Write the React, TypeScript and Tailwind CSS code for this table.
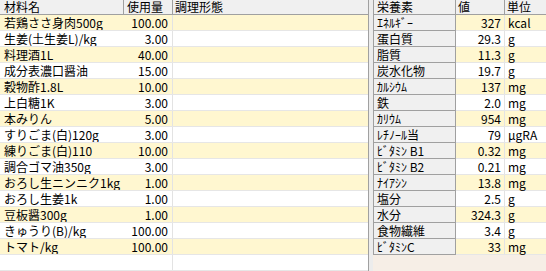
import React from "react";

const ingredients = [
  ["若鶏ささ身肉500g", "100.00"],
  ["生姜(土生姜L)/kg", "3.00"],
  ["料理酒1L", "40.00"],
  ["成分表濃口醤油", "15.00"],
  ["穀物酢1.8L", "10.00"],
  ["上白糖1K", "3.00"],
  ["本みりん", "5.00"],
  ["すりごま(白)120g", "3.00"],
  ["練りごま(白)110", "10.00"],
  ["調合ゴマ油350g", "3.00"],
  ["おろし生ニンニク1kg", "1.00"],
  ["おろし生姜1k", "1.00"],
  ["豆板醤300g", "1.00"],
  ["きゅうり(B)/kg", "100.00"],
  ["トマト/kg", "100.00"],
  ["", ""],
];

const nutrients = [
  ["ｴﾈﾙｷﾞｰ", "327", "kcal"],
  ["蛋白質", "29.3", "g"],
  ["脂質", "11.3", "g"],
  ["炭水化物", "19.7", "g"],
  ["ｶﾙｼｳﾑ", "137", "mg"],
  ["鉄", "2.0", "mg"],
  ["ｶﾘｳﾑ", "954", "mg"],
  ["ﾚﾁﾉｰﾙ当", "79", "μgRA"],
  ["ﾋﾞﾀﾐﾝ B1", "0.32", "mg"],
  ["ﾋﾞﾀﾐﾝ B2", "0.21", "mg"],
  ["ﾅｲｱｼﾝ", "13.8", "mg"],
  ["塩分", "2.5", "g"],
  ["水分", "324.3", "g"],
  ["食物繊維", "3.4", "g"],
  ["ﾋﾞﾀﾐﾝC", "33", "mg"],
];

const App = () => {
  return (
    <div className="flex h-[271px] w-[546px] overflow-hidden bg-[#ececec] font-['Noto_Sans_CJK_JP',sans-serif] text-[12px] leading-[14px] text-black">
      {/* 材料 */}
      <div className="flex w-[369px] shrink-0 flex-col border-r border-[#a0a0a0] bg-white">
        <div className="flex h-[15px] shrink-0 border-b border-[#a0a0a0] bg-[#f0f0f0]">
          <div className="w-[124px] border-r border-[#a0a0a0] pl-[4px]">材料名</div>
          <div className="w-[49px] border-r border-[#a0a0a0] pl-[3px]">使用量</div>
          <div className="flex-1 pl-[2px]">調理形態</div>
        </div>
        {ingredients.map(([name, qty], i) => (
          <div
            key={i}
            className={
              "flex h-[16px] shrink-0 border-b border-[#e6e6e6] leading-[15px] " +
              (i % 2 === 0 && name ? "bg-[#fff7d0]" : "bg-white")
            }
          >
            <div className="w-[124px] truncate pl-[4px]">{name}</div>
            <div className="w-[49px] border-r border-[#e3e3e3] pr-[4px] text-right">{qty}</div>
            <div className="flex-1" />
          </div>
        ))}
      </div>

      <div className="w-[4px] shrink-0" />

      {/* 栄養素 */}
      <div className="flex flex-1 flex-col bg-[#f6eee6]">
        <div className="flex flex-col border-l border-[#a0a0a0]">
          <div className="flex h-[15px] shrink-0 border-b border-[#a0a0a0] bg-[#f0f0f0]">
            <div className="w-[82px] border-r border-[#a0a0a0] pl-[3px]">栄養素</div>
            <div className="w-[49px] border-r border-[#a0a0a0] pl-[2px]">値</div>
            <div className="flex-1 pl-[2px]">単位</div>
          </div>
          {nutrients.map(([label, value, unit], i) => (
            <div key={i} className="flex h-[16px] shrink-0 leading-[15px]">
              <div className="w-[82px] border-r border-b border-[#a0a0a0] bg-[#f0f0f0] pl-[3px]">{label}</div>
              <div
                className={
                  "flex flex-1 border-b border-[#e6e6e6] " +
                  (i % 2 === 0 ? "bg-[#fff7d0]" : "bg-white")
                }
              >
                <div className="w-[49px] border-r border-[#e3e3e3] pr-[3px] text-right">{value}</div>
                <div className="flex-1 pl-[3px]">{unit}</div>
              </div>
            </div>
          ))}
        </div>
      </div>
    </div>
  );
};

export default App;
